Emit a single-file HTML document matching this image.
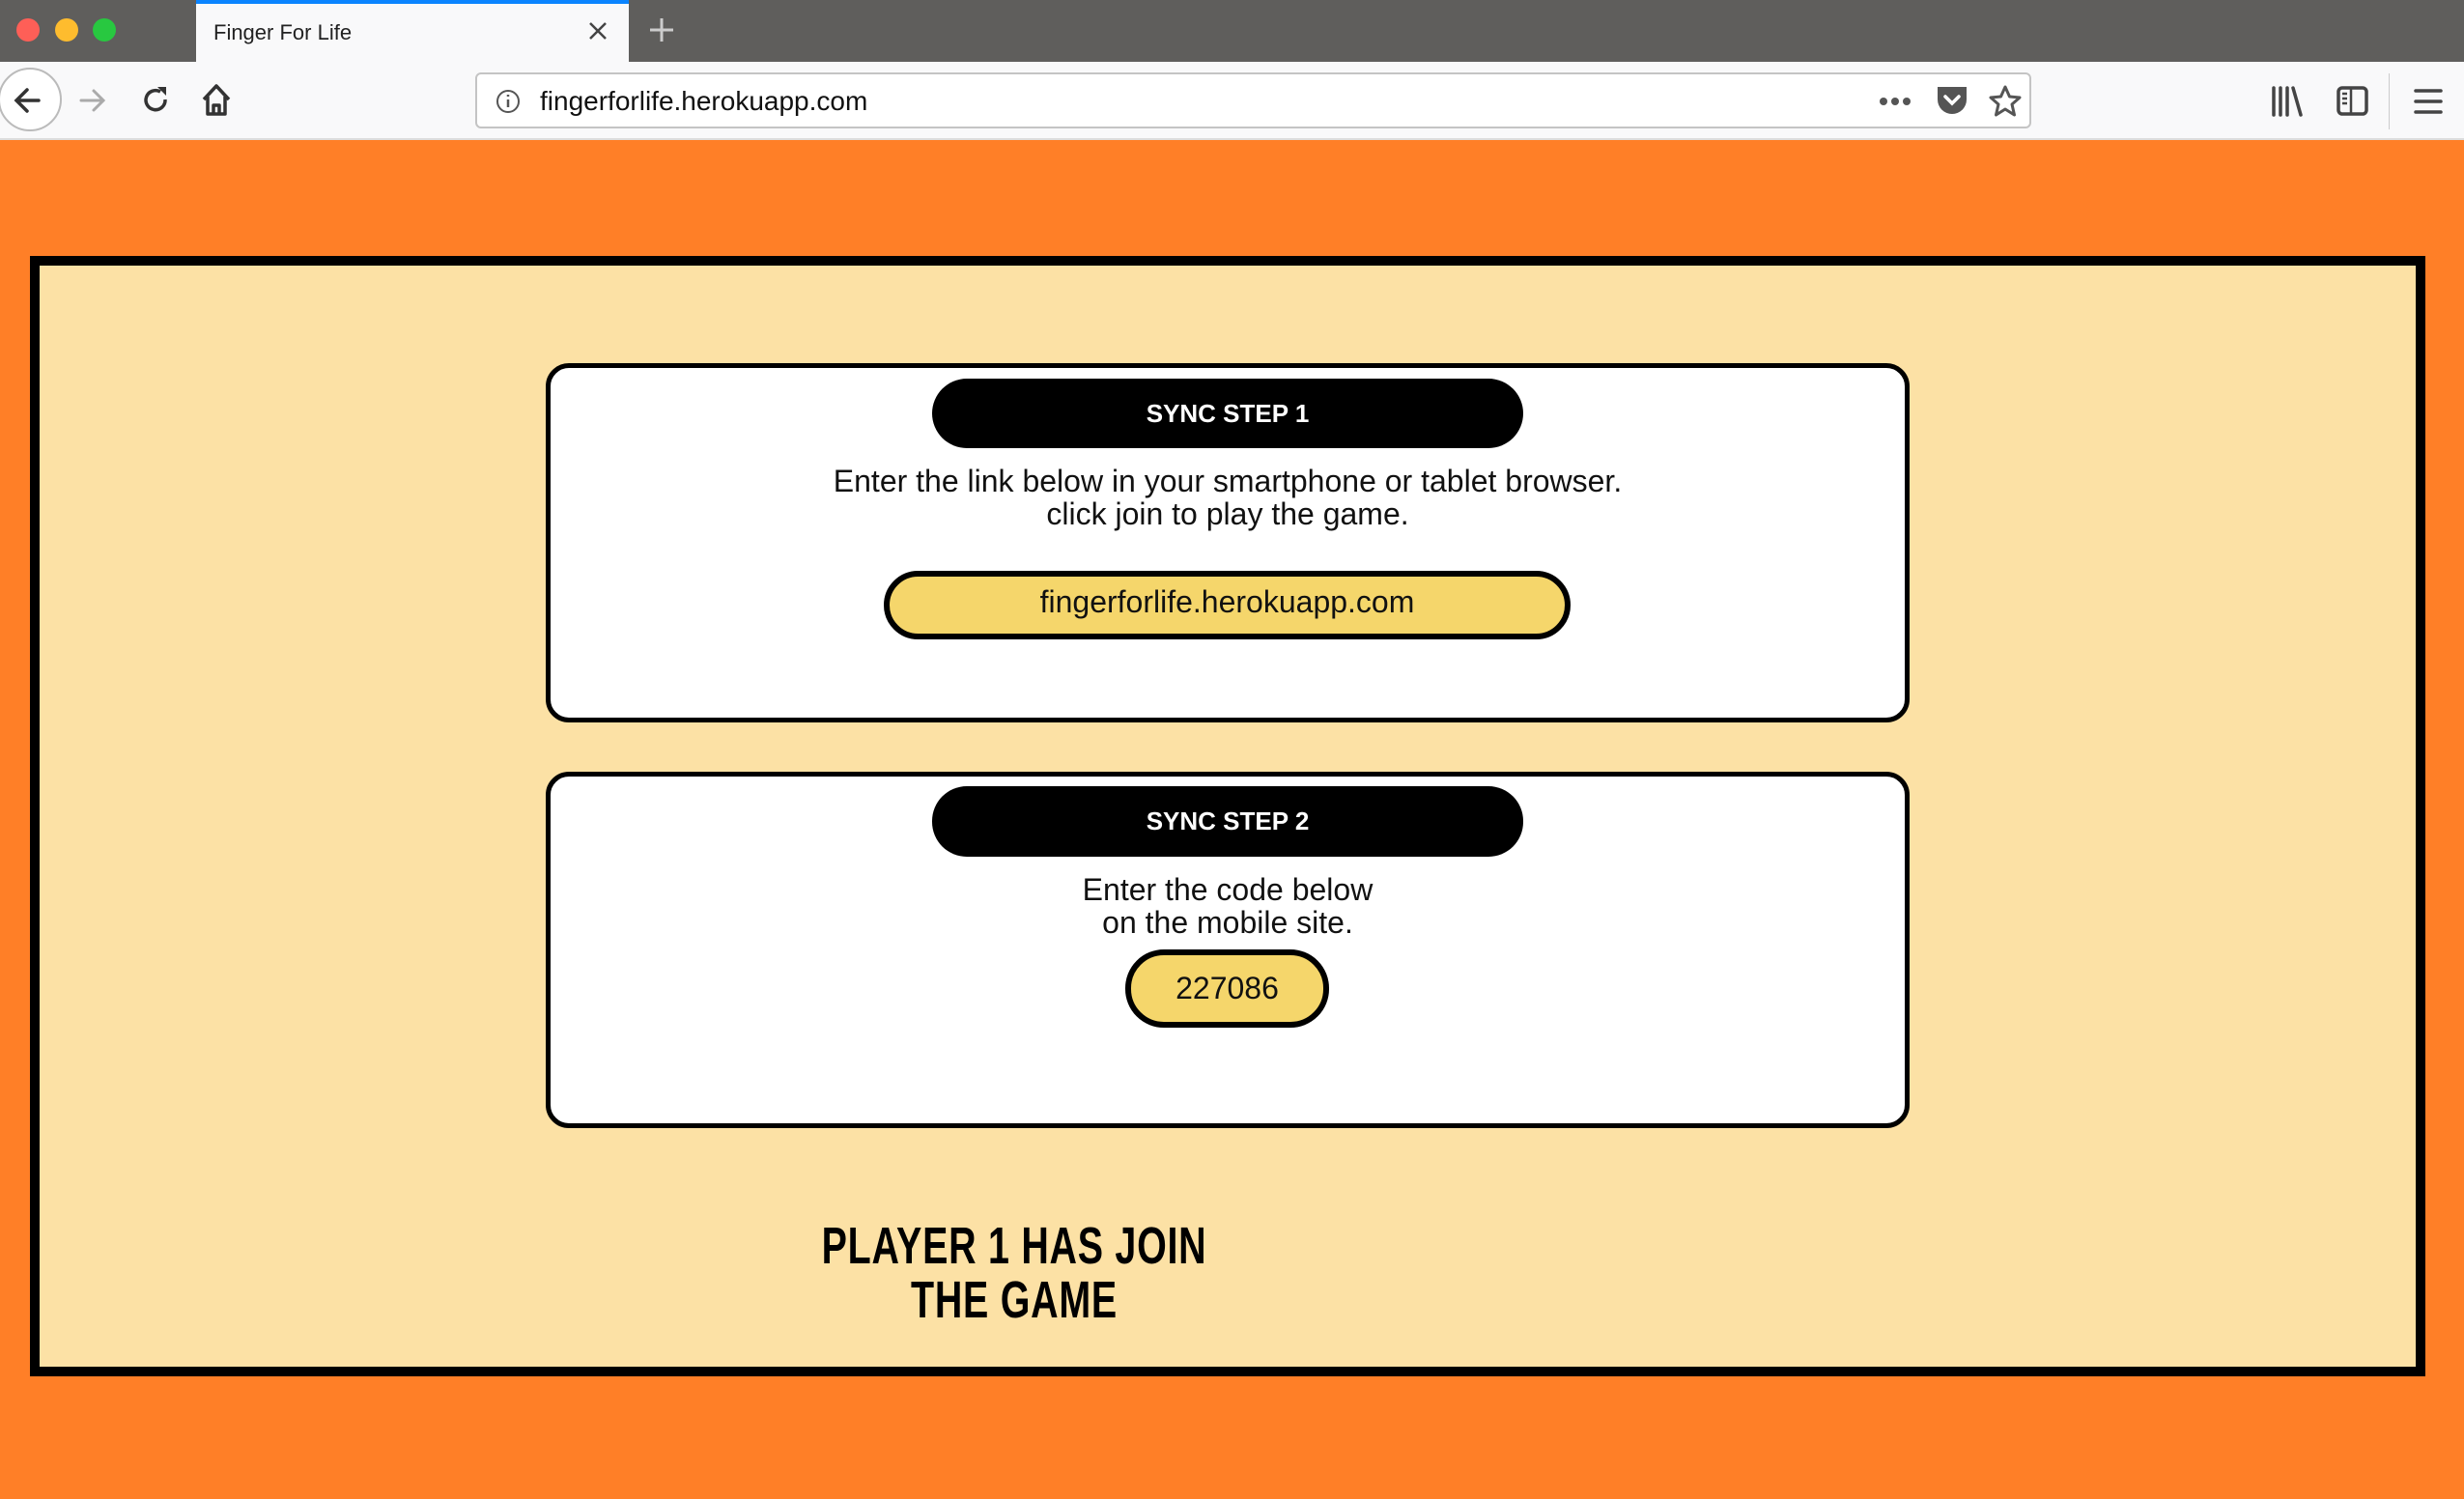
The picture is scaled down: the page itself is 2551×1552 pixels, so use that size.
<!DOCTYPE html>
<html><head><meta charset="utf-8"><style>
*{margin:0;padding:0;box-sizing:border-box}
body{width:2551px;height:1552px;overflow:hidden;background:#FF7F27;font-family:"Liberation Sans",sans-serif;position:relative}
.abs{position:absolute}
#tabs{left:0;top:0;width:2551px;height:64px;background:#5f5e5c}
.dot{position:absolute;top:19px;width:24px;height:24px;border-radius:50%}
#tab{left:203px;top:0;width:448px;height:64px;background:#f9f9fa;border-top:4px solid #0a84ff}
#toolbar{left:0;top:64px;width:2551px;height:81px;background:#f9f9fa;border-bottom:2px solid #ddd}
#url{left:492px;top:75px;width:1611px;height:58px;background:#fff;border:2px solid #c4c4c4;border-radius:6px}
#frame{left:31px;top:265px;width:2480px;height:1160px;background:#FCE1A5;border:10px solid #000}
.box{position:absolute;left:565px;width:1412px;background:#fff;border:5px solid #000;border-radius:24px}
.pill{position:absolute;left:965px;width:612px;height:72px;background:#000;border-radius:36px;color:#fff;font-weight:bold;font-size:26px;text-align:center;line-height:72px}
.txt{position:absolute;left:565px;width:1412px;text-align:center;font-size:32px;line-height:34px;color:#111}
.yp{position:absolute;background:#F5D66B;border:6px solid #000;border-radius:40px;text-align:center;font-size:32px;color:#111}
#player{left:700px;top:1262px;width:700px;text-align:center;font-weight:bold;font-size:54px;line-height:56px;color:#000;transform:scaleX(0.73);transform-origin:350px 0;letter-spacing:1px}
</style></head><body>
<div id="tabs" class="abs">
<div class="dot" style="left:17px;background:#fe5f57"></div>
<div class="dot" style="left:57px;background:#febc2e"></div>
<div class="dot" style="left:96px;background:#28c840"></div>
<svg class="abs" style="left:670px;top:16px" width="30" height="30"><path d="M15 3V27M3 15H27" stroke="#ccc" stroke-width="3"/></svg>
</div>
<div id="tab" class="abs">
<div class="abs" style="left:18px;top:17px;font-size:22px;color:#222">Finger For Life</div>
<svg class="abs" style="left:404px;top:16px" width="24" height="24"><path d="M4 4L20 20M20 4L4 20" stroke="#444" stroke-width="2.5"/></svg>
</div>
<div id="toolbar" class="abs">
<div class="abs" style="left:-2px;top:6px;width:66px;height:66px;border-radius:50%;border:2px solid #bbb;background:#fff"></div>
<svg class="abs" style="left:10px;top:22px" width="40" height="36"><path d="M30 18H8M18 7L7 18L18 29" stroke="#333" stroke-width="3.5" fill="none" stroke-linecap="round"/></svg>
<svg class="abs" style="left:78px;top:22px" width="36" height="36"><path d="M6 18H28M19 8L29 18L19 28" stroke="#aaa" stroke-width="3" fill="none" stroke-linecap="round"/></svg>
<svg class="abs" style="left:144px;top:22px" width="36" height="36"><path d="M27 17A10 10 0 1 1 22 9" stroke="#333" stroke-width="3.5" fill="none"/><path d="M19 4H28V13Z" fill="#333"/></svg>
<svg class="abs" style="left:206px;top:20px" width="36" height="40"><path d="M5 19L18 5L31 19M9 16V34H27V16M15 34V25H21V34" stroke="#333" stroke-width="3.5" fill="none" stroke-linejoin="round"/></svg>
<svg class="abs" style="left:2350px;top:24px" width="36" height="34"><path d="M4 3V31M11 3V31M18 3V31M24 3L32 31" stroke="#444" stroke-width="3.5" stroke-linecap="round"/></svg>
<svg class="abs" style="left:2418px;top:24px" width="36" height="34"><rect x="3" y="3" width="29" height="27" rx="4" stroke="#444" stroke-width="3.5" fill="none"/><path d="M16 3V30M7 9H12M7 14H12M7 19H12" stroke="#444" stroke-width="2.5"/></svg>
<div class="abs" style="left:2473px;top:12px;width:1px;height:58px;background:#ccc"></div>
<svg class="abs" style="left:2498px;top:26px" width="32" height="30"><path d="M3 4H29M3 15H29M3 26H29" stroke="#444" stroke-width="3.5" stroke-linecap="round"/></svg>
</div>
<div id="url" class="abs">
<svg class="abs" style="left:18px;top:14px" width="28" height="28"><circle cx="14" cy="14" r="11" stroke="#555" stroke-width="2" fill="none"/><path d="M14 12V20M14 7V9" stroke="#555" stroke-width="2.5"/></svg>
<div class="abs" style="left:65px;top:12px;font-size:28px;color:#111">fingerforlife.herokuapp.com</div>
<svg class="abs" style="left:1448px;top:14px" width="40" height="28"><circle cx="8" cy="14" r="4" fill="#555"/><circle cx="20" cy="14" r="4" fill="#555"/><circle cx="32" cy="14" r="4" fill="#555"/></svg>
<svg class="abs" style="left:1510px;top:10px" width="34" height="34"><path d="M2 3H32V16A15 15 0 0 1 2 16Z" fill="#555"/><path d="M10 13L17 20L24 13" stroke="#fff" stroke-width="3.5" fill="none" stroke-linecap="round"/></svg>
<svg class="abs" style="left:1564px;top:10px" width="36" height="36"><path d="M18 3L22.5 13L33 14L25 21L27.5 32L18 26L8.5 32L11 21L3 14L13.5 13Z" stroke="#555" stroke-width="3" fill="none" stroke-linejoin="round"/></svg>
</div>
<div id="frame" class="abs"></div>
<div class="box" style="top:376px;height:372px"></div>
<div class="pill" style="top:392px">SYNC STEP 1</div>
<div class="txt" style="top:481px">Enter the link below in your smartphone or tablet browser.<br>click join to play the game.</div>
<div class="yp" style="left:915px;top:591px;width:711px;height:71px;line-height:52px">fingerforlife.herokuapp.com</div>
<div class="box" style="top:799px;height:369px"></div>
<div class="pill" style="top:814px;height:73px">SYNC STEP 2</div>
<div class="txt" style="top:904px">Enter the code below<br>on the mobile site.</div>
<div class="yp" style="left:1165px;top:983px;width:211px;height:81px;line-height:68px">227086</div>
<div id="player" class="abs">PLAYER 1 HAS JOIN<br>THE GAME</div>
</body></html>
